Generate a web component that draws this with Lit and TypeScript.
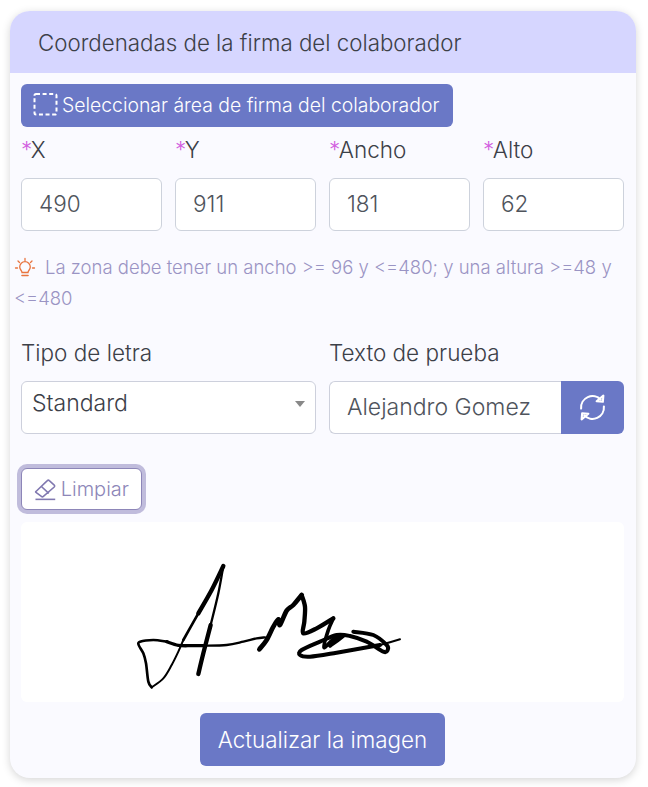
import { LitElement, html, css, svg } from "lit";
import { customElement } from "lit/decorators.js";

const FIELDS: [string, string][] = [["X", "490"], ["Y", "911"], ["Ancho", "181"], ["Alto", "62"]];

function smooth(p: number[][]): string {
  let d = `M${p[0][0]} ${p[0][1]}`;
  for (let i = 0; i < p.length - 1; i++) {
    const a = p[Math.max(i - 1, 0)], b = p[i], c = p[i + 1], e = p[Math.min(i + 2, p.length - 1)];
    d += `C${b[0] + (c[0] - a[0]) / 6} ${b[1] + (c[1] - a[1]) / 6} ${c[0] - (e[0] - b[0]) / 6} ${c[1] - (e[1] - b[1]) / 6} ${c[0]} ${c[1]}`;
  }
  return d;
}

const STROKES: [number, number[][]][] = [
  [6, [[95, 412], [130, 385], [155, 345], [175, 305], [190, 270]]],
  [8, [[190, 270], [235, 190]]],
  [13, [[235, 190], [275, 120], [310, 48]]],
  [7, [[310, 48], [295, 130], [272, 225]]],
  [13, [[272, 225], [250, 310], [235, 372]]],
  [8, [[95, 412], [85, 395], [78, 340], [70, 310], [56, 285], [60, 275], [100, 270], [140, 275]]],
  [10, [[140, 275], [175, 286], [215, 287], [250, 287]]],
  [7, [[250, 287], [320, 285], [370, 275], [410, 265], [435, 262]]],
  [14, [[418, 298], [440, 270], [460, 230], [475, 208], [480, 225], [500, 182], [520, 165], [545, 135]]],
  [13, [[545, 135], [555, 170], [553, 215], [550, 250], [590, 235], [640, 205]]],
  [11, [[640, 205], [625, 240], [612, 292], [640, 268], [672, 256], [630, 288]]],
  [12, [[700, 245], [760, 255], [800, 285], [803, 300], [790, 305], [740, 275], [690, 258], [650, 255], [600, 275], [545, 300], [540, 315], [570, 320], [650, 308], [780, 285]]],
  [6, [[780, 285], [840, 268]]],
];

@customElement("app-root")
export class AppRoot extends LitElement {
  static styles = css`
    :host { display: block; width: 648px; height: 787px; box-sizing: border-box; padding: 11px 12px 9px 10px; background: #fff;
      font-family: "Inter", "Noto Sans", sans-serif; font-weight: 300; color: #3c4048; }
    .card { height: 767px; box-sizing: border-box; background: #fafaff; border-radius: 20px; overflow: hidden; box-shadow: 0 2px 9px rgba(0,0,0,.17); display: flex; flex-direction: column; }
    .head { height: 62px; flex: none; background: #d6d6ff; display: flex; align-items: center; padding: 0 28px; font-size: 22.300px; }
    .body { padding: 11px 12px 12px 11px; display: flex; flex-direction: column; }
    .select-btn { align-self: flex-start; height: 43px; width: 432px; box-sizing: border-box; border: 0; border-radius: 6px; background: #6a78c6; color: #fff; font: inherit; font-size: 19.400px; display: flex; align-items: center; gap: 4px; padding: 0 12px 2px; }
    .grid { display: grid; grid-template-columns: repeat(4, 141px); column-gap: 13px; }
    .lab { height: 44px; margin-bottom: 7px; font-size: 22.500px; display: flex; align-items: center; }
    .lab b { color: #d25fe0; font-weight: 300; margin-right: -1.500px; }
    .inp { height: 53px; box-sizing: border-box; background: #fff; border: 1px solid #cdd2dc; border-radius: 6px; font-size: 22.500px; color: #4f545c; display: flex; align-items: center; padding: 0 17px 2px; }
    .hint { margin-top: 21px; margin-left: -7px; font-size: 18.500px; line-height: 31px; color: #9a94c4; width: 606px; }
    .hint svg { vertical-align: -5px; margin-right: 9px; }
    .pair { display: grid; grid-template-columns: 295px 295px; column-gap: 13px; margin-top: 25px; }
    .lab2 { height: 26px; font-size: 22.500px; display: flex; align-items: center; margin-bottom: 16px; }
    .sel { height: 53px; box-sizing: border-box; background: #fff; border: 1px solid #cdd0dc; border-radius: 6px; font-size: 23px; display: flex; align-items: flex-start; justify-content: space-between; padding: 7px 10px 0 10px; }
    .caret { width: 0; height: 0; border-left: 5px solid transparent; border-right: 5px solid transparent; border-top: 6px solid #888; margin-top: 12px; }
    .group { display: flex; height: 53px; }
    .txt { flex: 1; box-sizing: border-box; background: #fff; border: 1px solid #cdd0dc; border-right: 0; border-radius: 6px 0 0 6px; font-size: 23px; color: #4f545c; display: flex; align-items: center; padding: 0 17px 2px; white-space: nowrap; }
    .ref { width: 63px; flex: none; background: #6a78c6; border-radius: 0 6px 6px 0; display: flex; align-items: center; justify-content: center; }
    .clear { align-self: flex-start; margin-top: 34px; width: 121px; height: 42px; box-sizing: border-box; background: #fff; border: 1px solid #8d86b8; border-radius: 6px; box-shadow: 0 0 0 4px #c0bcdc; color: #8d86b8; font: inherit; font-size: 20px; display: flex; align-items: center; gap: 4px; padding: 0 12px; }
    .panel { margin-top: 12px; height: 180px; box-sizing: border-box; background: #fff; border-radius: 6px; padding: 28px 0 0 99px; }
    .panel svg { display: block; }
    .update { align-self: center; margin-top: 11px; width: 245px; height: 53px; border: 0; border-radius: 6px; background: #6a78c6; color: #fff; font: inherit; font-size: 22.400px; padding: 0; }
  `;

  render() {
    return html`<div class="card">
      <div class="head">Coordenadas de la firma del colaborador</div>
      <div class="body">
        <button class="select-btn">
          <svg width="25" height="25" viewBox="0 0 25 25" fill="none" stroke="#fff" stroke-width="2"><rect x="1.500" y="2" width="22" height="20.500" rx="1.500" stroke-dasharray="4 2.600"/></svg>
          Seleccionar área de firma del colaborador
        </button>
        <div class="grid">
          ${FIELDS.map(([l]) => html`<div class="lab"><b>*</b>${l}</div>`)}
          ${FIELDS.map(([, v]) => html`<div class="inp">${v}</div>`)}
        </div>
        <div class="hint">
          <svg width="22" height="22" viewBox="0 0 22 22" fill="none" stroke="#e8743f" stroke-width="1.300" stroke-linecap="round"><path d="M11 1.500v2M4 4l1.500 1.500M18 4l-1.500 1.500M1.500 11h2M18.500 11h2"/><path d="M8 15.500c0-2-2.300-2.700-2.300-5.500a5.300 5.300 0 0 1 10.600 0c0 2.800-2.300 3.500-2.300 5.500z"/><path d="M8 18.500h6" stroke-width="1.600"/></svg>La zona debe tener un ancho >= 96 y <=480; y una altura >=48 y <=480
        </div>
        <div class="pair">
          <div>
            <div class="lab2">Tipo de letra</div>
            <div class="sel">Standard<span class="caret"></span></div>
          </div>
          <div>
            <div class="lab2">Texto de prueba</div>
            <div class="group">
              <div class="txt">Alejandro Gomez</div>
              <div class="ref">
                <svg width="29" height="29" viewBox="0 0 28 28" fill="none" stroke="#fff" stroke-width="2" stroke-linecap="round"><path d="M3 15a11 11 0 0 1 19-8.500M25 13a11 11 0 0 1-19 8.500"/><path d="M24.500 2.500l-.500 6-6-.500zM3.500 25.500l.500-6 6 .500z" stroke-linejoin="round"/></svg>
              </div>
            </div>
          </div>
        </div>
        <button class="clear">
          <svg width="23" height="24" viewBox="0 0 23 24" fill="none" stroke="#8078b0" stroke-width="1.600" stroke-linejoin="round"><path d="M1.500 22.500h20"/><path d="M2 14.500L13.500 3.500q1-1 2 0l5 4.500q1 1 0 2L9.500 19.500q-1 1-2 0L2 15.500q-.700-.500 0-1zM7.500 9.500l7.500 7"/></svg>
          Limpiar
        </button>
        <div class="panel">
          <svg width="300" height="150" viewBox="0 0 900 450" fill="none" stroke="#000" stroke-linecap="round" stroke-linejoin="round">
            ${STROKES.map(([w, pts]) => svg`<path stroke-width=${w} d=${smooth(pts)}></path>`)}
          </svg>
        </div>
        <button class="update">Actualizar la imagen</button>
      </div>
    </div>`;
  }
}
